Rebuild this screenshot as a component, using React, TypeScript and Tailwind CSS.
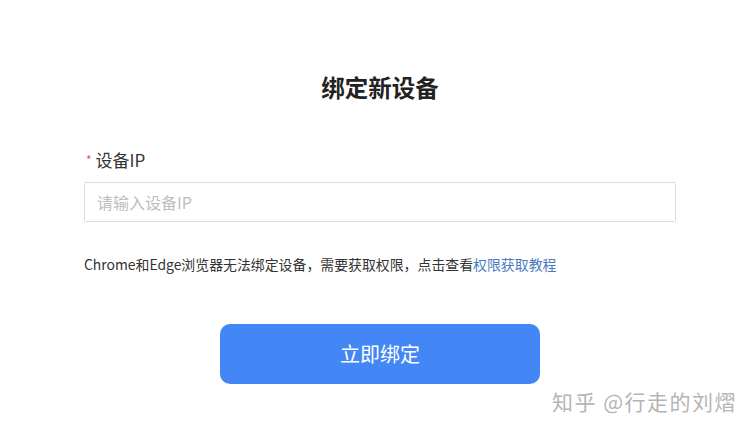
import * as React from "react";

const FONT = { fontFamily: '"Noto Sans CJK SC", "Noto Sans", sans-serif' };

export default function App() {
  const [ip, setIp] = React.useState("");

  return (
    <div className="relative w-[755px] h-[432px] bg-white overflow-hidden" style={FONT}>
      <div className="w-[592px] ml-[84px] pt-[70px] flex flex-col">
        <h1 className="text-center text-[23.5px] leading-[34px] font-bold text-[#222]">绑定新设备</h1>

        <label className="mt-[44px] flex items-center text-[17px] leading-[24px] text-[#333]">
          <span className="text-[#e0556b] text-[12px] mr-[4px] ml-[2px]">*</span>
          设备IP
        </label>

        <input
          className="mt-[10px] h-[40px] w-full border border-[#dcdcdc] rounded-[2px] px-[12px] text-[16px] text-[#333] placeholder:text-[#bdbdbd] outline-none"
          placeholder="请输入设备IP"
          value={ip}
          onChange={(e) => setIp(e.target.value)}
        />

        <p className="mt-[32px] text-[13.9px] leading-[20px] text-[#333]">
          Chrome和Edge浏览器无法绑定设备，需要获取权限，点击查看
          <a href="#" className="text-[#4a7bc0]">权限获取教程</a>
        </p>

        <button className="mt-[50px] self-center w-[320px] h-[60px] rounded-[10px] bg-[#4287f5] text-white text-[20px]">
          立即绑定
        </button>
      </div>

      {/* watermark */}
      <div className="absolute left-[552px] top-[386px] text-[21px] leading-[30px] text-[#b5b5b5] tracking-[1.5px]">
        知乎 @行走的刘熠
      </div>
    </div>
  );
}
